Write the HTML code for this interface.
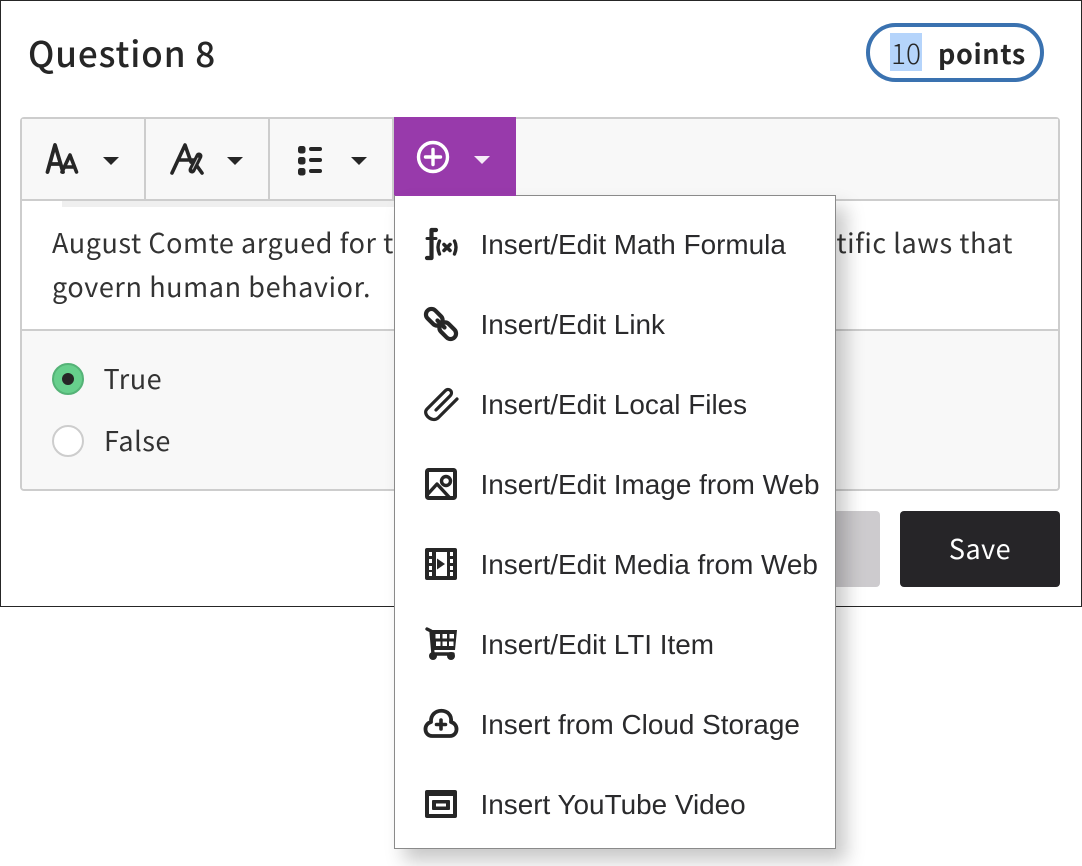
<!DOCTYPE html>
<html><head><meta charset="utf-8">
<style>
html,body{margin:0;padding:0;background:#fff}
body{width:1082px;height:866px;position:relative;overflow:hidden;font-family:"Noto Sans CJK SC","Liberation Sans",sans-serif;color:#262626}
.a{position:absolute;box-sizing:border-box}
.t{position:absolute;white-space:nowrap}
.m{position:absolute;left:480.500px;white-space:nowrap;font:27.900px/40px "Liberation Sans",sans-serif;color:#2a2a2c}
svg{position:absolute;overflow:visible}
</style></head><body>
<div class="a" style="left:0;top:0;width:1082px;height:607px;border:1px solid #262626;background:#fff"></div>
<div class="t" style="left:28px;top:31px;font-size:35px;line-height:44px;font-weight:500;letter-spacing:.9px">Question 8</div>
<div class="a" style="left:866px;top:23px;width:178px;height:59px;border:4px solid #3a72b0;border-radius:30px;background:#fff"></div>
<div class="a" style="left:890px;top:33px;width:32px;height:38px;background:#b5d4fb"></div>
<div class="t" style="left:891px;top:33px;font-size:28px;line-height:40px;font-weight:300">10</div>
<div class="t" style="left:938px;top:33px;font-size:27px;line-height:40px;font-weight:700;letter-spacing:.6px">points</div>

<div class="a" style="left:20px;top:117px;width:1040px;height:374px;border:2px solid #cdcdcd;border-radius:4px;background:#fff"></div>
<div class="a" style="left:22px;top:119px;width:371px;height:81px;background:#f8f8f8"></div>
<div class="a" style="left:516px;top:119px;width:542px;height:81px;background:#f8f8f8"></div>
<div class="a" style="left:22px;top:199px;width:1036px;height:2px;background:#cdcdcd"></div>
<div class="a" style="left:144px;top:119px;width:2px;height:81px;background:#cdcdcd"></div>
<div class="a" style="left:268px;top:119px;width:2px;height:81px;background:#cdcdcd"></div>
<div class="a" style="left:392px;top:119px;width:2px;height:81px;background:#cdcdcd"></div>
<div class="a" style="left:62px;top:201px;width:334px;height:6px;background:#efefef"></div>
<div class="a" style="left:394px;top:117px;width:122px;height:79px;background:#983aab"></div>

<svg style="left:0;top:0" width="1082" height="210" fill="none" stroke="#262626" stroke-linecap="round" stroke-linejoin="round">
<path d="M47.500 172 L55 145 L63 172 M51 164 H60" stroke-width="3.800"/>
<path d="M62 172 L70 155 L76.500 172 M65 167 H74" stroke-width="3.600"/>
<path d="M172 173 L185 145 L191 162 M178 160 H194" stroke-width="3.600"/>
<path d="M192 170 L199 156" stroke-width="7"/>
<path d="M197 166 L202 173" stroke-width="3.600"/>
<path d="M192.500 169 L198 158" stroke="#cfcfcf" stroke-width="1"/>
<g fill="#262626" stroke="none">
<rect x="298" y="146" width="7.500" height="7.500" rx="2.500"/><rect x="298" y="157" width="7.500" height="7.500" rx="2.500"/><rect x="298" y="168" width="7.500" height="7.500" rx="2.500"/>
<rect x="309" y="147" width="13" height="4" rx="2"/><rect x="309" y="158" width="13" height="4" rx="2"/><rect x="309" y="169" width="13" height="4" rx="2"/>
<path d="M103 157H119L111 165Z"/><path d="M227 157H243L235 165Z"/><path d="M351 157H367L359 165Z"/>
</g>
<circle cx="433" cy="157" r="14.500" stroke="#fff" stroke-width="3.400"/>
<path d="M433 149.500V164.500M425.500 157H440.500" stroke="#fff" stroke-width="3.400"/>
<path d="M474 156H490L482 164Z" fill="#fff" stroke="none" opacity=".9"/>
</svg>

<div class="t" style="left:52px;top:220px;font-size:27px;line-height:44px;letter-spacing:.55px;color:#333">August Comte argued for t</div>
<div class="t" style="right:69px;top:220px;font-size:27px;line-height:44px;letter-spacing:.55px;color:#333">ntific laws that</div>
<div class="t" style="left:52px;top:264px;font-size:27px;line-height:44px;letter-spacing:.6px;color:#333">govern human behavior.</div>

<div class="a" style="left:22px;top:329px;width:1036px;height:2px;background:#cdcdcd"></div>
<div class="a" style="left:22px;top:331px;width:1036px;height:158px;background:#f8f8f8;border-radius:0 0 3px 3px"></div>
<div class="a" style="left:52px;top:363px;width:32px;height:32px;border-radius:50%;background:#67cf8c;border:2px solid #55b377"></div>
<div class="a" style="left:62px;top:373px;width:12px;height:12px;border-radius:50%;background:#262626"></div>
<div class="a" style="left:52px;top:425px;width:32px;height:32px;border-radius:50%;background:#fff;border:2px solid #cdcdcd"></div>
<div class="t" style="left:103.500px;top:356px;font-size:27px;line-height:44px;letter-spacing:.5px;color:#333">True</div>
<div class="t" style="left:104px;top:418px;font-size:27px;line-height:44px;letter-spacing:.5px;color:#333">False</div>

<div class="a" style="left:800px;top:511px;width:80px;height:76px;background:#cdcbce;border-radius:4px"></div>
<div class="a" style="left:900px;top:511px;width:160px;height:76px;background:#262528;border-radius:4px"></div>
<div class="t" style="left:900px;top:526px;width:160px;text-align:center;font-size:27px;line-height:44px;letter-spacing:.5px;color:#fff">Save</div>

<div class="a" style="left:394px;top:195px;width:442px;height:654px;background:#fff;border:1px solid #8a8a8a;box-shadow:10px 12px 18px rgba(0,0,0,.22)"></div>
<div class="a" style="left:395px;top:194px;width:121px;height:2px;background:#983aab"></div>

<div class="m" style="top:225px">Insert/Edit Math Formula</div>
<div class="m" style="top:305px">Insert/Edit Link</div>
<div class="m" style="top:385px">Insert/Edit Local Files</div>
<div class="m" style="top:465px">Insert/Edit Image from Web</div>
<div class="m" style="top:545px">Insert/Edit Media from Web</div>
<div class="m" style="top:625px">Insert/Edit LTI Item</div>
<div class="m" style="top:705px">Insert from Cloud Storage</div>
<div class="m" style="top:785px">Insert YouTube Video</div>

<svg style="left:0;top:0" width="1082" height="866" fill="none" stroke="#262626" stroke-linecap="round" stroke-linejoin="round">
<!-- f(x) -->
<path d="M436 230H431.500V258H427" stroke-width="4.200"/>
<path d="M427 238.500H436" stroke-width="3"/>
<path d="M439.500 241Q436.500 247 439.500 254M454.500 241Q457.500 247 454.500 254" stroke-width="3.400"/>
<path d="M444 244.500L450 250.500M450 244.500L444 250.500" stroke-width="3.600"/>
<!-- link -->
<g transform="rotate(45 441 324)" stroke-width="4.200">
<rect x="422" y="318.500" width="19" height="11" rx="5.500"/>
<rect x="441" y="318.500" width="19" height="11" rx="5.500"/>
<path d="M436 324H446"/>
</g>
<!-- clip -->
<path d="M457 399L438 418C432 423 422 414 427 409L445 391C449 387 454 392 450 396L436 410" stroke-width="3.200"/>
<!-- image -->
<rect x="427" y="470" width="28" height="28" rx="1.500" stroke-width="4"/>
<circle cx="446" cy="481" r="4.500" stroke-width="3.400"/>
<path d="M427 495L437 484L449 497" stroke-width="3.400"/>
<!-- film -->
<rect x="425" y="548" width="32" height="32" rx="2" fill="#262626" stroke="none"/>
<rect x="436" y="552" width="11" height="24" fill="#fff" stroke="none"/>
<g fill="#fff" stroke="none"><rect x="429" y="552" width="3" height="4"/><rect x="429" y="559" width="3" height="4"/><rect x="429" y="566" width="3" height="4"/><rect x="429" y="572" width="3" height="4"/><rect x="450" y="552" width="3" height="4"/><rect x="450" y="559" width="3" height="4"/><rect x="450" y="566" width="3" height="4"/><rect x="450" y="572" width="3" height="4"/></g>
<path d="M437 558.500L445 564L437 569.500Z" fill="#262626" stroke="none"/>
<!-- cart -->
<path d="M427 629L431 631L433 654H453" stroke-width="3.400"/>
<path d="M431 630H457L455 650H433Z" fill="#262626" stroke="none"/>
<g fill="#fff" stroke="none"><rect x="435.500" y="634" width="4.500" height="4.500"/><rect x="442.500" y="634" width="4.500" height="4.500"/><rect x="449.500" y="634" width="4.500" height="4.500"/><rect x="436" y="641.500" width="4.500" height="4.500"/><rect x="442.500" y="641.500" width="4.500" height="4.500"/><rect x="449" y="641.500" width="4.500" height="4.500"/></g>
<circle cx="433" cy="656" r="4" fill="#262626" stroke="none"/><circle cx="451" cy="656" r="4" fill="#262626" stroke="none"/>
<!-- cloud -->
<path d="M432 736H450C458 736 459 724 451 722C453 707 430 707 431 722C423 724 424 736 432 736Z" stroke-width="3.800"/>
<path d="M441 720V729M436.500 724.500H445.500" stroke-width="3.600"/>
<!-- youtube -->
<rect x="425" y="790" width="32" height="28" rx="2" fill="#262626" stroke="none"/>
<rect x="429" y="796" width="24" height="18" fill="#fff" stroke="none"/>
<rect x="432" y="800" width="18" height="10" rx="1" fill="#262626" stroke="none"/>
<rect x="436" y="803.500" width="10" height="3" fill="#fff" stroke="none"/>
</svg>
</body></html>
